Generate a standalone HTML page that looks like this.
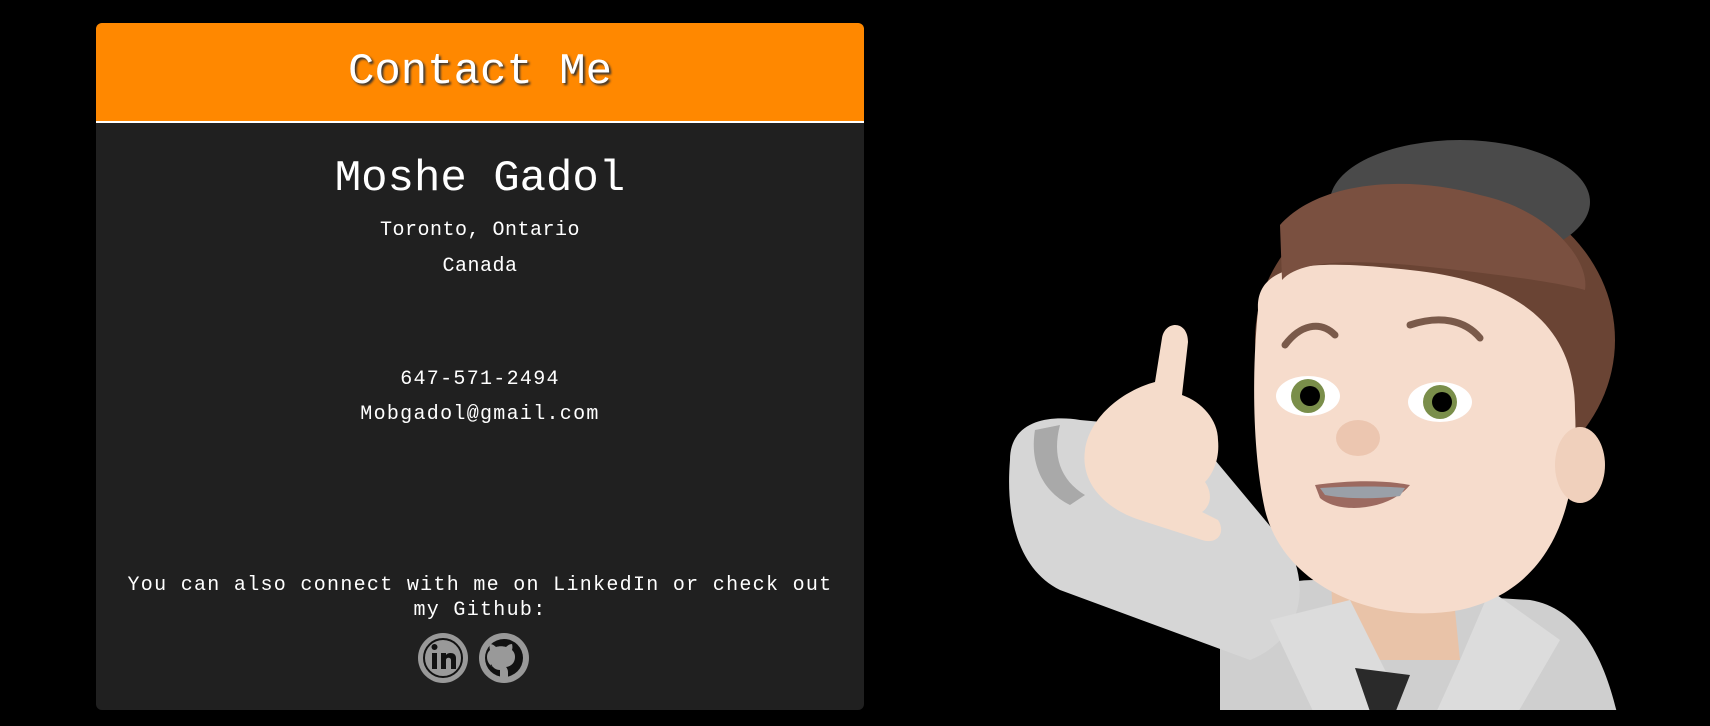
<!DOCTYPE html>
<html><head><meta charset="utf-8">
<style>
html,body{margin:0;padding:0;background:#000;width:1710px;height:726px;overflow:hidden;font-family:"Liberation Mono",monospace;color:#fff}
.card{position:absolute;left:96px;top:23px;width:768px;height:687px;background:#202020;border-radius:6px;overflow:hidden}
.hdr{position:absolute;left:0;top:0;width:768px;height:98px;background:#ff8800;border-bottom:2px solid #fff}
.t{position:absolute;left:0;width:768px;text-align:center;white-space:nowrap}
</style></head><body>
<div class="card">
 <div class="hdr"></div>
 <div class="t" style="top:22px;font-size:44px;line-height:54px;text-shadow:2px 2px 2px #333">Contact Me</div>
 <div class="t" style="top:129px;font-size:44px;line-height:54px">Moshe Gadol</div>
 <div class="t" style="top:196px;font-size:20px;line-height:24px;letter-spacing:0.5px">Toronto, Ontario</div>
 <div class="t" style="top:232px;font-size:20px;line-height:24px;letter-spacing:0.5px">Canada</div>
 <div class="t" style="top:345px;font-size:20px;line-height:24px;letter-spacing:1.3px">647-571-2494</div>
 <div class="t" style="top:380px;font-size:20px;line-height:24px;letter-spacing:1.3px">Mobgadol@gmail.com</div>
 <div class="t" style="top:550px;font-size:20px;line-height:25px;letter-spacing:1.3px;white-space:normal;padding:0 16px;box-sizing:border-box">You can also connect with me on LinkedIn or check out my Github:</div>
 <svg style="position:absolute;left:0;top:0" width="768" height="687">
  <g transform="translate(347,635)">
   <circle r="25" fill="#999"/>
   <circle r="19" fill="none" stroke="#111" stroke-width="2"/>
   <rect x="-11" y="-5" width="5" height="16" fill="#111"/>
   <circle cx="-8.5" cy="-11" r="3" fill="#111"/>
   <path d="M-2 -5h5v2c2-3 10-3 10 3v11h-5v-9c0-3-5-3-5 0v9h-5z" fill="#111"/>
  </g>
  <g transform="translate(408,635)">
   <circle r="25" fill="#999"/>
   <circle r="19" fill="#111"/>
   <path d="M-4 19v-7c-4 0-7-2-9-6 0 0-1 2 2 3-4-2-6-6-6-10 0-3 1-5 3-7-1-3 0-6 0-6 2 0 4 1 6 3 3-1 7-1 10 0 2-2 4-3 6-3 0 0 1 3 0 6 2 2 3 4 3 7 0 4-2 9-9 10 1 1 2 3 2 5v5z" fill="#999"/>
  </g>
 </svg>
</div>
<svg style="position:absolute;left:990px;top:120px" width="650" height="590" viewBox="0 0 650 590">
 <path d="M230 500 C260 460 330 450 380 470 L540 480 C600 490 620 560 630 606 L230 606 Z" fill="#cfcfcf"/>
 <path d="M20 340 C20 300 60 295 90 300 L200 310 L300 430 C320 470 310 520 260 540 L70 470 C30 450 15 400 20 340Z" fill="#d6d6d6"/>
 <path d="M45 310 C40 340 50 370 80 385 L95 375 C70 360 62 335 70 305 Z" fill="#a9a9a9"/>
 <path d="M340 440 L460 440 L470 540 L345 540 Z" fill="#e9c3a8"/>
 <path d="M280 500 L360 480 L400 560 L375 606 L330 606 Z" fill="#dcdcdc"/>
 <path d="M500 470 L570 520 L520 606 L440 606 L470 540 Z" fill="#dcdcdc"/>
 <path d="M365 548 L420 555 L400 606 L385 606 Z" fill="#2a2a2a"/>
 <ellipse cx="445" cy="220" rx="180" ry="160" fill="#6a4434"/>
 <ellipse cx="470" cy="82" rx="130" ry="62" fill="#4a4a4a"/>
 <path d="M268 190 C265 140 330 140 420 150 C520 160 585 200 585 290 C590 390 560 470 470 490 C390 505 295 470 275 390 C262 330 262 250 268 190Z" fill="#f6dccc"/>
 <ellipse cx="590" cy="345" rx="25" ry="38" fill="#f0d0bc"/>
 <path d="M290 105 C330 60 420 55 490 75 C560 90 600 140 595 170 C560 160 470 150 420 145 C360 140 310 140 292 160 Z" fill="#7a5040"/>
 <path d="M295 225 C310 205 330 200 345 215" stroke="#7a5a4a" stroke-width="7" fill="none" stroke-linecap="round"/>
 <path d="M420 205 C450 195 475 200 490 218" stroke="#7a5a4a" stroke-width="7" fill="none" stroke-linecap="round"/>
 <ellipse cx="318" cy="276" rx="32" ry="20" fill="#fff"/>
 <circle cx="318" cy="276" r="17" fill="#7a8e4a"/><circle cx="320" cy="276" r="10" fill="#000"/>
 <ellipse cx="450" cy="282" rx="32" ry="20" fill="#fff"/>
 <circle cx="450" cy="282" r="17" fill="#7a8e4a"/><circle cx="452" cy="282" r="10" fill="#000"/>
 <ellipse cx="368" cy="318" rx="22" ry="18" fill="#ecc6b0"/>
 <path d="M325 365 C360 360 395 360 420 365 C400 390 350 395 330 378Z" fill="#9c6a60"/>
 <path d="M330 368 C360 366 395 366 415 368 L410 376 C380 380 350 378 335 375Z" fill="#9aa0a8"/>
 <path d="M95 330 C100 295 135 270 165 262 L172 218 C175 200 198 200 198 222 L192 275 C212 282 228 300 228 320 C230 340 222 355 215 362 C222 372 222 385 212 392 L228 400 C236 412 228 425 212 420 L150 400 C118 390 90 365 95 330Z" fill="#f5dccb"/>
</svg>
</body></html>
